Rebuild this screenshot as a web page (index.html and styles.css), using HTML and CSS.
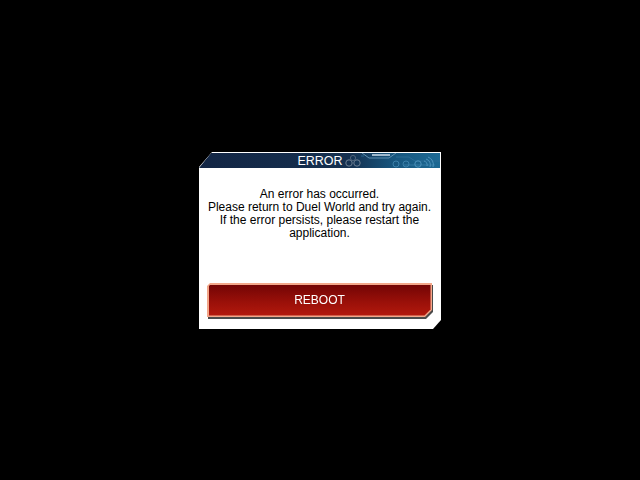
FILE: index.html
```html
<!DOCTYPE html>
<html>
<head>
<meta charset="utf-8">
<link rel="stylesheet" href="styles.css">
</head>
<body>
<div class="screen">
  <div class="dialog">
    <div class="header">
      <svg class="circuit" width="242" height="15" viewBox="0 0 242 15">
        <defs>
          <linearGradient id="hg" x1="0" x2="1" y1="0" y2="0">
            <stop offset="0" stop-color="#132645"/>
            <stop offset="0.62" stop-color="#15304f"/>
            <stop offset="0.8" stop-color="#17557d"/>
            <stop offset="1" stop-color="#1d6a94"/>
          </linearGradient>
        </defs>
        <rect width="242" height="15" fill="url(#hg)"/>
        <path d="M163 0 L170 5 L190 5 L197 0" fill="none" stroke="#5f8fb0" stroke-width="1"/>
        <rect x="173" y="1" width="18" height="2" fill="#9fb8cc"/>
        <path d="M162 3 L165 3 M197 4 L210 4 L216 8 L242 8" fill="none" stroke="#2f6f98" stroke-width="0.8"/>
        <path d="M205 12 L236 12" stroke="#3a80a8" stroke-width="0.8"/>
        <circle cx="197" cy="11" r="3" fill="none" stroke="#3d82ac" stroke-width="1"/>
        <circle cx="207" cy="11" r="3" fill="none" stroke="#3d82ac" stroke-width="1"/>
        <circle cx="219" cy="11" r="3.2" fill="none" stroke="#4d92bb" stroke-width="1"/>
        <path d="M228 13 A4 4 0 0 0 225 8 M231 14 A6 6 0 0 0 227 6 M234 14 A8 8 0 0 0 229 4" fill="none" stroke="#4d92bb" stroke-width="1"/>
        <circle cx="150" cy="10" r="3.2" fill="none" stroke="#6d7f93" stroke-width="1"/>
        <circle cx="158" cy="10" r="3.2" fill="none" stroke="#6d7f93" stroke-width="1"/>
        <circle cx="154" cy="5" r="2.6" fill="none" stroke="#5c6e83" stroke-width="0.8"/>
      </svg>
      <span class="title">ERROR</span>
    </div>
    <div class="body">
      <p class="message">An error has occurred.<br>Please return to Duel World and try again.<br>If the error persists, please restart the<br>application.</p>
      <div class="btn-wrap">
        <div class="btn">
          <div class="btn-face">REBOOT</div>
        </div>
      </div>
    </div>
  </div>
</div>
</body>
</html>
```
FILE: styles.css
```css
html, body {
  margin: 0;
  padding: 0;
  background: #000;
}
.screen {
  width: 640px;
  height: 480px;
  background: #000;
  display: flex;
  align-items: center;
  justify-content: center;
}
.dialog {
  width: 242px;
  height: 177px;
  margin-top: 1px;
  background: #fff;
  display: flex;
  flex-direction: column;
  clip-path: polygon(13px 0, 100% 0, 100% 168px, 234px 100%, 0 100%, 0 15px);
}
.header {
  position: relative;
  height: 15px;
  margin-top: 1px;
  margin-right: 1px;
  display: flex;
  align-items: flex-end;
  justify-content: center;
  clip-path: polygon(12px 0, 100% 0, 100% 100%, 0 100%, 0 15px);
}
.circuit {
  position: absolute;
  left: 0;
  top: 0;
}
.title {
  position: relative;
  color: #fff;
  font-family: "Liberation Sans", Arial, sans-serif;
  font-size: 12.5px;
  line-height: 14px;
  margin-left: 1px;
}
.body {
  flex: 1;
  display: flex;
  flex-direction: column;
  padding: 0 9px 12px 8px;
}
.message {
  margin: 20px 0 0 0;
  text-align: center;
  color: #000;
  font-family: "Liberation Sans", Arial, sans-serif;
  font-size: 12px;
  line-height: 13px;
}
.btn-wrap {
  margin-top: auto;
  filter: drop-shadow(1px 2px 0 #4a4a4a);
}
.btn {
  height: 34px;
  background: #f3a78a;
  padding: 1.5px;
  box-sizing: border-box;
  clip-path: polygon(3px 0, 100% 0, 100% calc(100% - 7px), calc(100% - 7px) 100%, 0 100%, 0 3px);
}
.btn-face {
  height: 100%;
  background: linear-gradient(#730505, #9a1009 55%, #b3190d);
  color: #fff;
  font-family: "Liberation Sans", Arial, sans-serif;
  font-size: 12px;
  display: flex;
  align-items: center;
  justify-content: center;
  clip-path: polygon(2px 0, 100% 0, 100% calc(100% - 6px), calc(100% - 6px) 100%, 0 100%, 0 2px);
}
```
